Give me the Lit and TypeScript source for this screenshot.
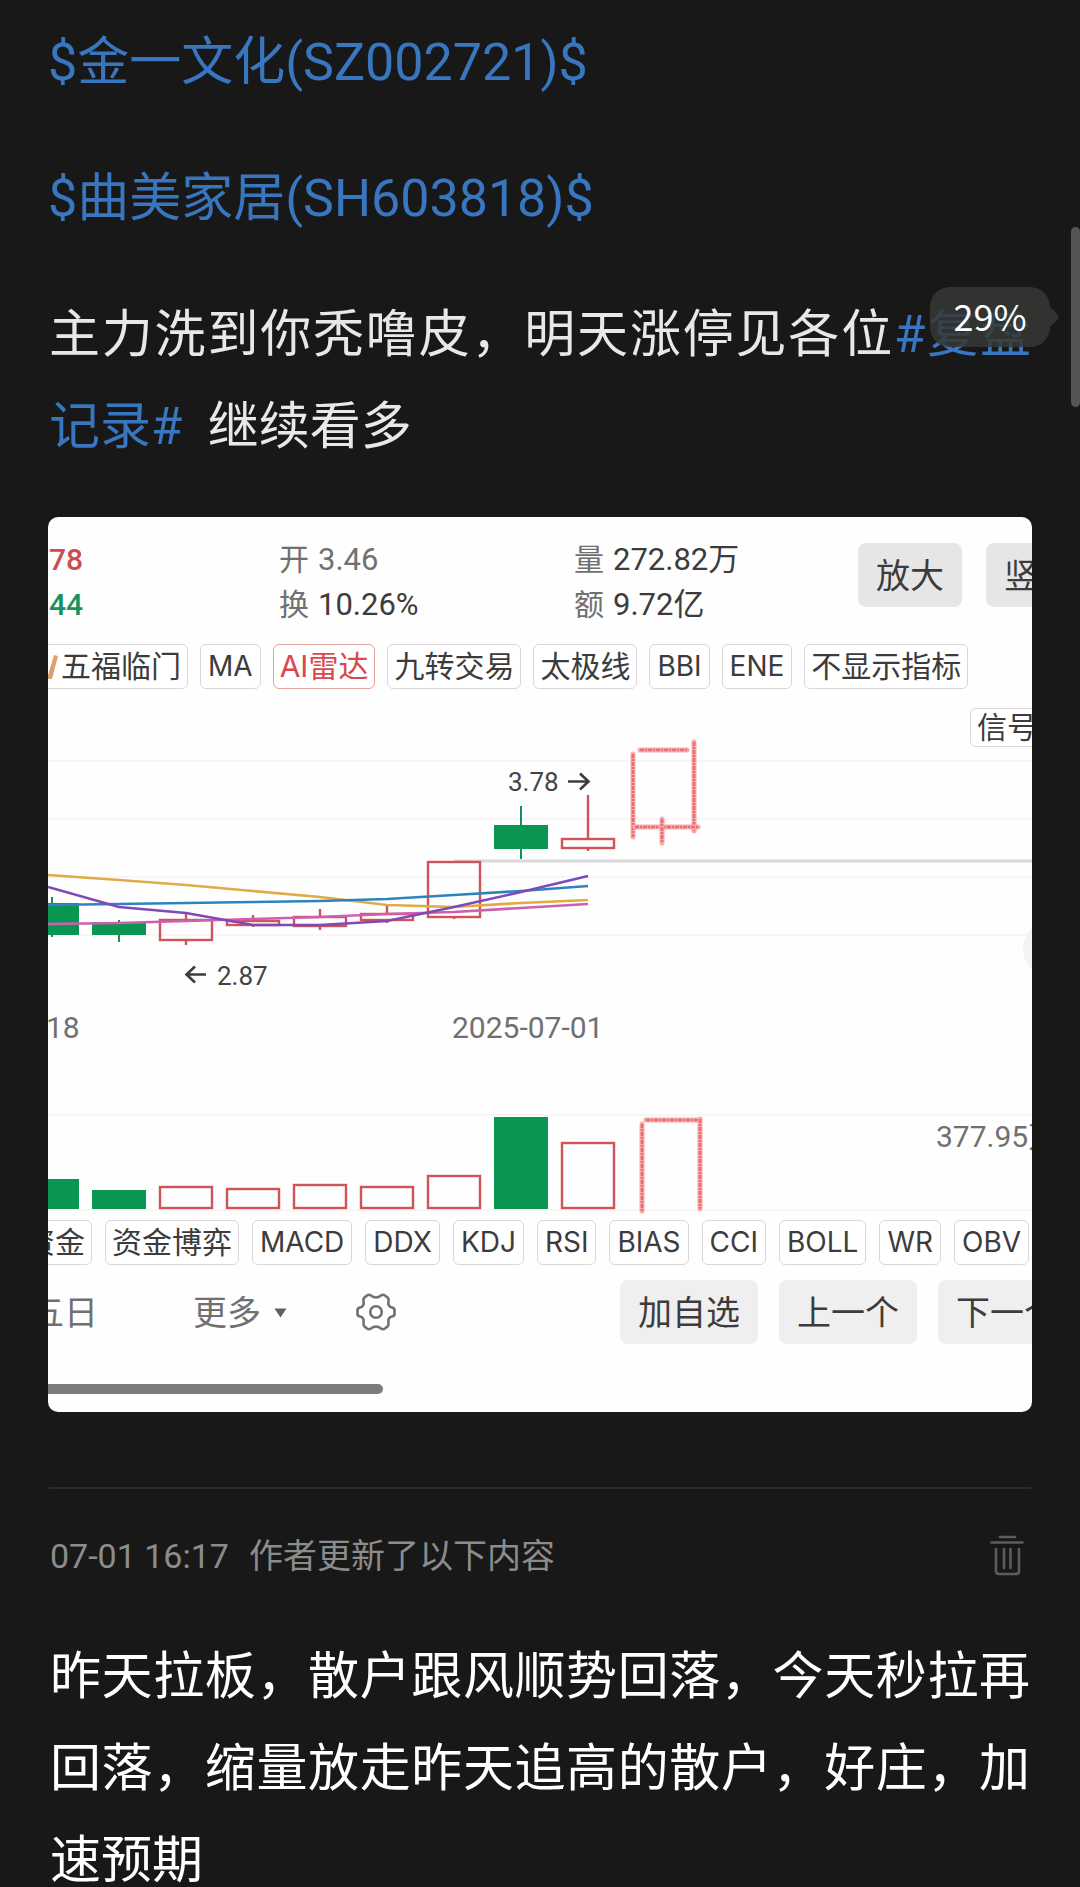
import { LitElement, html, svg, css } from "lit";
import { customElement } from "lit/decorators.js";
import { classMap } from "lit/directives/class-map.js";

type Point = [number, number];

interface Candle {
  x: number;
  open: number;
  close: number;
  high: number;
  low: number;
  volumeTop: number;
  rising: boolean;
}

const HALF = 26;
const VOLUME_BASE = 1208;

const CANDLES: Candle[] = [
  { x: 52, open: 904, close: 934, high: 897, low: 937, volumeTop: 1180, rising: false },
  { x: 119, open: 923, close: 934, high: 920, low: 942, volumeTop: 1191, rising: false },
  { x: 186, open: 920, close: 940, high: 913, low: 945, volumeTop: 1187, rising: true },
  { x: 253, open: 921, close: 925, high: 915, low: 927, volumeTop: 1189, rising: true },
  { x: 320, open: 917, close: 926, high: 909, low: 930, volumeTop: 1185, rising: true },
  { x: 387, open: 914, close: 920, high: 906, low: 923, volumeTop: 1187, rising: true },
  { x: 454, open: 862, close: 917, high: 861, low: 919, volumeTop: 1176, rising: true },
  { x: 521, open: 826, close: 848, high: 806, low: 859, volumeTop: 1118, rising: false },
  { x: 588, open: 839, close: 848, high: 795, low: 851, volumeTop: 1143, rising: true },
];

const AVERAGES: { color: string; values: number[] }[] = [
  { color: "#dfab45", values: [875, 880, 885, 891, 897, 905, 907, 903, 900] },
  { color: "#2f83bd", values: [905, 904, 903, 902, 901, 899, 895, 891, 886] },
  { color: "#cf5fae", values: [924, 923, 921, 919, 917, 914, 912, 908, 904] },
  { color: "#8049b8", values: [887, 907, 913, 925, 925, 921, 907, 892, 876] },
];

const SKETCH: [Point, Point][] = [
  [[633, 754], [633, 837]],
  [[640, 750], [687, 750]],
  [[694, 742], [694, 831]],
  [[635, 827], [698, 827]],
  [[662, 819], [662, 843]],
  [[642, 1124], [642, 1211]],
  [[646, 1120], [698, 1120]],
  [[700, 1119], [700, 1209]],
];

@customElement("stock-chart")
export class StockChart extends LitElement {
  static styles = css`
    :host {
      display: block;
    }
    .plot {
      display: block;
      width: 100%;
      height: auto;
      font-family: Roboto, "Noto Sans CJK SC", sans-serif;
    }
    .grid {
      stroke: #f7f2f4;
      stroke-width: 1.5;
    }
    .last {
      stroke: #d9d7da;
      stroke-width: 3;
    }
    .up {
      fill: none;
      stroke: #cf5357;
      stroke-width: 2.4;
    }
    .down {
      fill: #0b9552;
      stroke: #0b9552;
      stroke-width: 2;
    }
    .average {
      fill: none;
      stroke-width: 2.6;
    }
    .sketch {
      stroke: #f6abac;
      stroke-width: 5;
      stroke-linecap: round;
    }
    .grain {
      stroke: #ec6c6f;
      stroke-width: 2.6;
      stroke-dasharray: 4 1 2 1;
    }
    .arrow {
      fill: none;
      stroke: #3c3c3c;
      stroke-width: 2.6;
    }
    .price {
      font-size: 26px;
      fill: #444;
    }
    .axis {
      font-size: 30px;
      fill: #707070;
    }
    .knob {
      fill: #f3f3f3;
    }
  `;

  private candle(c: Candle) {
    const kind = c.rising ? "up" : "down";
    return svg`
      <line class=${kind} x1=${c.x} x2=${c.x} y1=${c.high} y2=${c.open}></line>
      <line class=${kind} x1=${c.x} x2=${c.x} y1=${c.close} y2=${c.low}></line>
      <rect class=${kind} x=${c.x - HALF} width=${HALF * 2} y=${c.open} height=${c.close - c.open}></rect>
      <rect class=${kind} x=${c.x - HALF} width=${HALF * 2} y=${c.volumeTop} height=${VOLUME_BASE - c.volumeTop}></rect>
    `;
  }

  render() {
    const gridRows = [761, 819, 877, 935, 1115, 1210];
    return html`
      <svg class="plot" viewBox="48 689 984 531" role="img" aria-label="K线图">
        ${gridRows.map((y) => svg`<line class="grid" x1="48" x2="1032" y1=${y} y2=${y}></line>`)}
        <circle class="knob" cx="1052" cy="949" r="29"></circle>
        <line class="last" x1="454" x2="1032" y1="861" y2="861"></line>
        ${CANDLES.map((c) => this.candle(c))}
        ${AVERAGES.map(
          (a) => svg`<polyline class="average" stroke=${a.color}
            points=${a.values.map((y, i) => `${i === 0 ? 48 : CANDLES[i].x},${y}`).join(" ")}></polyline>`
        )}
        ${SKETCH.map(
          ([a, b]) => svg`
            <line class="sketch" x1=${a[0]} y1=${a[1]} x2=${b[0]} y2=${b[1]}></line>
            <line class="grain" x1=${a[0]} y1=${a[1]} x2=${b[0]} y2=${b[1]}></line>`
        )}
        <text class="price" x="508" y="791">3.78</text>
        <path class="arrow" d="M568 781.500H588M580 773.500L588.500 781.500L580 789.500"></path>
        <path class="arrow" d="M206 974.500H187M195 966.500L186.500 974.500L195 982.500"></path>
        <text class="price" x="217" y="985">2.87</text>
        <text class="axis" x="46" y="1038">18</text>
        <text class="axis" x="452" y="1038">2025-07-01</text>
        <text class="axis" x="936" y="1147">377.95万</text>
      </svg>
    `;
  }
}

@customElement("quote-card")
export class QuoteCard extends LitElement {
  static styles = css`
    :host {
      display: block;
      box-sizing: border-box;
      overflow: hidden;
      padding: 20px 0 18px;
      border-radius: 10px;
      background: #fefefe;
      color: #3c3c3c;
      font-family: Roboto, "Noto Sans CJK SC", sans-serif;
      white-space: nowrap;
    }
    button {
      flex: none;
      margin: 0;
      border: 0;
      background: none;
      color: inherit;
      font-family: inherit;
    }
    .head {
      display: grid;
      grid-template-columns: 231px 295px 282px max-content;
    }
    .pair {
      font-size: 31px;
      line-height: 45px;
    }
    .pair p {
      display: flex;
      gap: 9px;
      margin: 0;
    }
    .label {
      color: #707070;
      font-size: 30px;
    }
    .muted {
      color: #707070;
    }
    .rise {
      color: #cf4b4f;
      font-size: 30px;
      font-weight: 500;
    }
    .fall {
      color: #17925a;
      font-size: 30px;
      font-weight: 500;
    }
    .indent {
      padding-left: 1px;
    }
    .actions {
      display: flex;
      gap: 24px;
      padding: 6px 0 0 2px;
    }
    .action {
      height: 64px;
      padding: 2px 18px 0;
      border-radius: 8px;
      background: #efefef;
      font-size: 34px;
      line-height: 62px;
    }
    .strong {
      background: #e6e6e6;
    }
    .tags {
      display: flex;
    }
    .upper {
      gap: 12px;
      margin: 17px 0 0 -27px;
    }
    .lower {
      gap: 13px;
      margin: 0 0 15px -30px;
    }
    .tag {
      display: flex;
      align-items: center;
      box-sizing: border-box;
      height: 45px;
      padding: 0 6px;
      border: 1px solid #d9d5d8;
      border-radius: 6px;
      background: #fff;
      font-family: Inter, "Noto Sans CJK SC", sans-serif;
      font-size: 30px;
      line-height: 43px;
    }
    .latin {
      padding: 0 7px;
      font-size: 28px;
    }
    .active {
      border-color: #e3a49d;
      color: #d9484c;
    }
    .flame {
      width: 30px;
      height: 30px;
      margin-right: 3px;
    }
    .stage {
      position: relative;
    }
    .signal {
      position: absolute;
      top: 19px;
      left: calc(100% - 62px);
      height: 39px;
    }
    .foot {
      display: flex;
      align-items: center;
      margin-left: -18px;
    }
    .period {
      padding: 2px 0 0;
      color: #707070;
      font-size: 34px;
      line-height: 62px;
    }
    .more {
      display: flex;
      align-items: center;
      gap: 13px;
      margin-left: 95px;
    }
    .caret {
      width: 13px;
      height: 10px;
    }
    .settings {
      margin-left: 68px;
      padding: 0;
    }
    .gear {
      display: block;
      width: 42px;
      height: 42px;
    }
    .steps {
      display: flex;
      gap: 21px;
      margin-left: 223px;
    }
    .track {
      margin-top: 40px;
    }
    .thumb {
      width: 34%;
      height: 10px;
      border-radius: 0 5px 5px 0;
      background: #7b7d7b;
    }
  `;

  private upper = ["MA", "AI雷达", "九转交易", "太极线", "BBI", "ENE", "不显示指标"];
  private lower = ["资金", "资金博弈", "MACD", "DDX", "KDJ", "RSI", "BIAS", "CCI", "BOLL", "WR", "OBV"];

  private tag(name: string) {
    const classes = { tag: true, active: name === "AI雷达", latin: /^[A-Z]+$/.test(name) };
    return html`<button class=${classMap(classes)}>${name}</button>`;
  }

  render() {
    return html`
      <div class="head">
        <div class="pair indent">
          <p class="rise">78</p>
          <p class="fall">44</p>
        </div>
        <div class="pair">
          <p><span class="label">开</span><span class="muted">3.46</span></p>
          <p><span class="label">换</span><span>10.26%</span></p>
        </div>
        <div class="pair">
          <p><span class="label">量</span><span>272.82万</span></p>
          <p><span class="label">额</span><span>9.72亿</span></p>
        </div>
        <div class="actions">
          <button class="action strong">放大</button>
          <button class="action strong">竖屏</button>
        </div>
      </div>
      <div class="tags upper">
        <button class="tag">
          <svg class="flame" viewBox="0 0 30 30" aria-hidden="true">
            <path d="M26 3L30 4L24 27H19Z" fill="#dda06c"></path>
          </svg>
          五福临门
        </button>
        ${this.upper.map((name) => this.tag(name))}
      </div>
      <div class="stage">
        <stock-chart></stock-chart>
        <button class="tag signal">信号</button>
      </div>
      <div class="tags lower">${this.lower.map((name) => this.tag(name))}</div>
      <div class="foot">
        <button class="period">五日</button>
        <button class="period more">
          更多
          <svg class="caret" viewBox="0 0 13 10" aria-hidden="true">
            <path d="M0.500 0.500H12.500L6.500 9.500Z" fill="#5f6160"></path>
          </svg>
        </button>
        <button class="settings" aria-label="设置">
          <svg class="gear" viewBox="-21 -21 42 42" fill="none" stroke="#707070" stroke-width="2.6" stroke-linejoin="round">
            <path
              d="M-9 -16.500Q-7 -18 -5 -16.500Q0 -12.500 5 -16.500Q7 -18 9 -16.500L11.500 -14.500Q13 -13 12.500 -11Q11.500 -5.500 16 -4.500Q18.500 -4 18.500 -2V2Q18.500 4 16 4.500Q11.500 5.500 12.500 11Q13 13 11.500 14.500L9 16.500Q7 18 5 16.500Q0 12.500 -5 16.500Q-7 18 -9 16.500L-11.500 14.500Q-13 13 -12.500 11Q-11.500 5.500 -16 4.500Q-18.500 4 -18.500 2V-2Q-18.500 -4 -16 -4.500Q-11.500 -5.500 -12.500 -11Q-13 -13 -11.500 -14.500Z"
            ></path>
            <circle r="5.800"></circle>
          </svg>
        </button>
        <div class="steps">
          <button class="action">加自选</button>
          <button class="action">上一个</button>
          <button class="action">下一个</button>
        </div>
      </div>
      <div class="track"><div class="thumb"></div></div>
    `;
  }
}

@customElement("app-root")
export class AppRoot extends LitElement {
  static styles = css`
    :host {
      display: block;
      position: relative;
      box-sizing: border-box;
      height: 100vh;
      overflow: hidden;
      padding: 17px 48px 0;
      background: #181818;
      color: #e8e8e8;
      font-family: Roboto, "Noto Sans CJK SC", sans-serif;
    }
    a {
      color: #3876bf;
      text-decoration: none;
    }
    .line {
      margin: 0 0 44px;
      padding: 0 1px;
      font-size: 51px;
      line-height: 92px;
      text-align: justify;
    }
    .ticker {
      padding: 0;
      font-size: 52px;
    }
    .update {
      margin: 0;
      padding: 0 2px;
      color: #fff;
    }
    .card {
      margin: 44px 0 75px;
    }
    .meta {
      display: flex;
      align-items: center;
      justify-content: space-between;
      margin: 0 1px;
      padding: 36px 7px 44px 1px;
      border-top: 2px solid #2a2b2a;
      color: #8c8c8c;
      font-size: 34px;
      line-height: 62px;
    }
    .note {
      display: flex;
      gap: 20px;
    }
    .remove {
      padding: 0;
      border: 0;
      background: none;
    }
    .bin {
      display: block;
      width: 34px;
      height: 42px;
    }
    .progress {
      position: absolute;
      top: 287px;
      right: 30px;
      width: 120px;
      padding-bottom: 4px;
      border-radius: 20px;
      background: rgba(54, 56, 54, 0.86);
      color: #fff;
      font-family: "Noto Sans CJK SC", sans-serif;
      font-size: 36px;
      line-height: 56px;
      text-align: center;
    }
    .tip {
      position: absolute;
      top: 20px;
      left: 100%;
      width: 9px;
      height: 20px;
      fill: rgba(54, 56, 54, 0.86);
    }
    .scroll {
      position: absolute;
      top: 227px;
      right: 0;
      width: 9px;
      height: 180px;
      border-radius: 5px;
      background: #545654;
    }
  `;

  render() {
    return html`
      <p class="line ticker"><a href="#SZ002721">$金一文化(SZ002721)$</a></p>
      <p class="line ticker"><a href="#SH603818">$曲美家居(SH603818)$</a></p>
      <p class="line">主力洗到你秃噜皮，明天涨停见各位<a href="#topic">#复盘记录#</a>&nbsp; 继续看多</p>
      <quote-card class="card"></quote-card>
      <div class="meta">
        <div class="note"><span>07-01 16:17</span><span>作者更新了以下内容</span></div>
        <button class="remove" aria-label="删除">
          <svg class="bin" viewBox="0 0 34 42" fill="none" stroke="#5c5c5e" stroke-width="2.600" stroke-linecap="round">
            <path d="M10 2H25M1.500 7.500H32.500M6 14V36Q6 39 9 39H26Q29 39 29 36V14M14 14V33M20.500 14V33"></path>
          </svg>
        </button>
      </div>
      <p class="line update">昨天拉板，散户跟风顺势回落，今天秒拉再回落，缩量放走昨天追高的散户，好庄，加速预期</p>
      <div class="progress">
        29%
        <svg class="tip" viewBox="0 0 9 20" aria-hidden="true"><path d="M0 0L7 7Q10 10 7 13L0 20Z"></path></svg>
      </div>
      <div class="scroll"></div>
    `;
  }
}
